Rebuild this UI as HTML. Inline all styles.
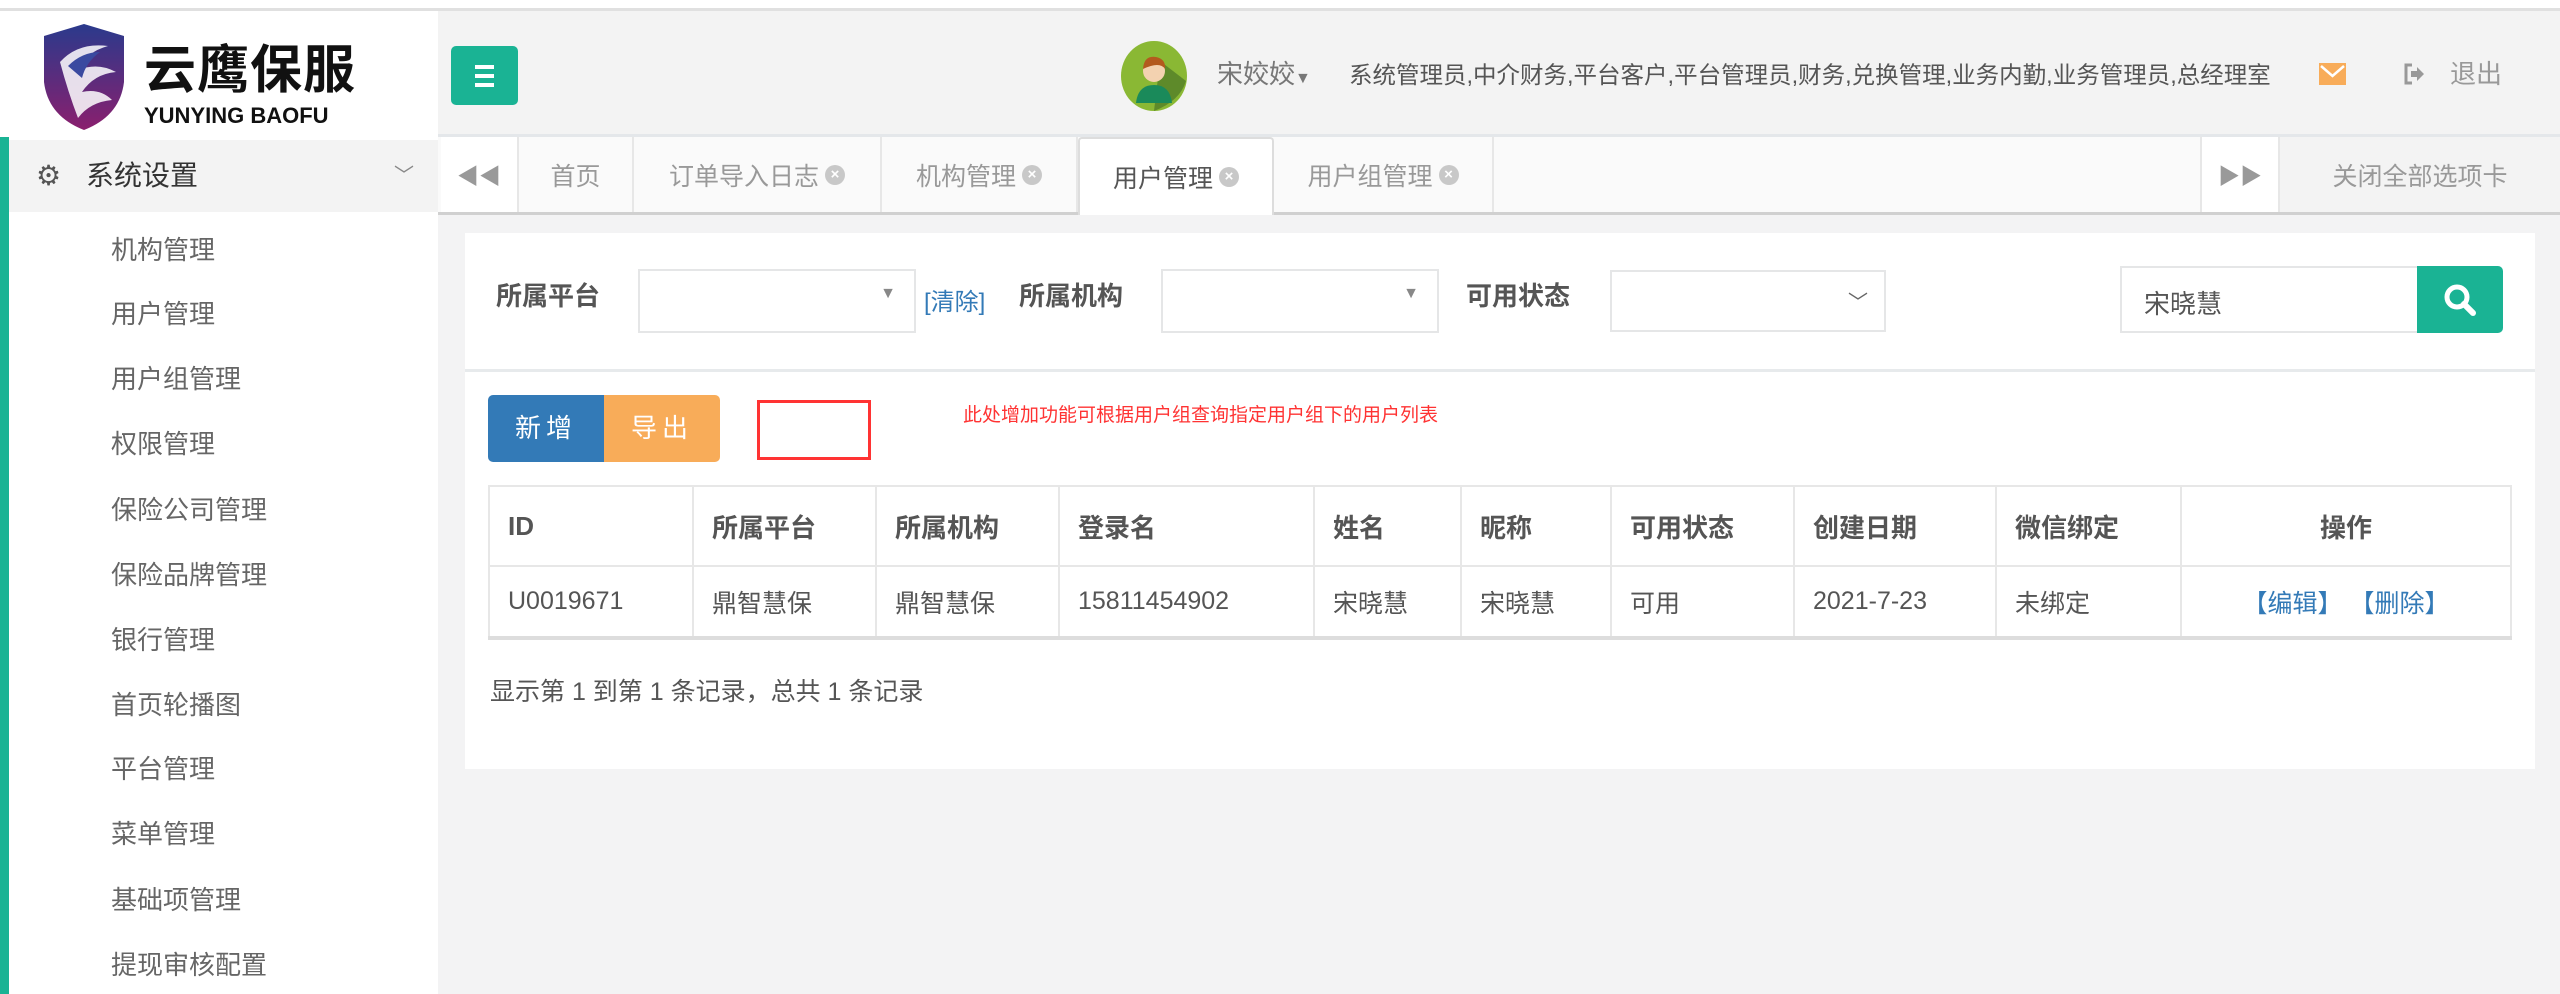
<!DOCTYPE html>
<html><head><meta charset="utf-8"><style>
*{margin:0;padding:0;box-sizing:border-box}
body{width:2560px;height:994px;overflow:hidden;background:#f3f3f4;font-family:"Liberation Sans","Noto Sans CJK SC",sans-serif;color:#676a6c;position:relative}
.a{position:absolute}
.topw{left:0;top:0;width:2560px;height:11px;background:#fff;border-bottom:3px solid #e0e0e0}
.hdr{left:438px;top:11px;width:2122px;height:126px;background:#f3f3f3;border-bottom:3px solid #e4e7ea}
.logo{left:0;top:11px;width:438px;height:126px;background:#fff}
.tabs{left:438px;top:137px;width:2122px;height:78px;background:#fafafa;border-bottom:3px solid #d0d0d0}
.tab{top:0;height:75px;border-right:2px solid #e7e7e7;font-size:25px;color:#999;display:flex;align-items:center;justify-content:center;gap:6px}
.x{display:inline-block;width:20px;height:20px;border-radius:50%;background:#c8c8c8;color:#fff;font-size:15px;line-height:20px;text-align:center;font-weight:bold}
.side{left:0;top:137px;width:438px;height:857px;background:#fff}
.mi{left:111px;font-size:26px;color:#666;line-height:30px}
.panel{left:465px;top:233px;width:2070px;height:536px;background:#fff}
.lbl{font-size:26px;font-weight:bold;color:#555;line-height:30px}
.sel{background:#fff;border:2px solid #e5e6e7}
table{border-collapse:collapse;font-size:25px;color:#555}
td{border:2px solid #e7e7e7;padding-left:18px}
</style></head><body>
<div class="a topw"></div>
<div class="a hdr"></div>
<div class="a logo">
 <svg class="a" style="left:38px;top:10px" width="92" height="112" viewBox="0 0 92 110">
  <defs><linearGradient id="g" x1="0" y1="0" x2="0" y2="1"><stop offset="0" stop-color="#2a3a8c"/><stop offset="1" stop-color="#8a1f6e"/></linearGradient></defs>
  <path d="M6 14 L46 2 L86 14 L86 60 Q82 94 46 108 Q10 94 6 60 Z" fill="url(#g)"/>
  <path d="M22 40 Q40 20 70 24 Q48 30 40 48 Q60 40 78 50 Q56 52 44 70 Q62 66 74 78 Q52 80 40 96 Q30 70 22 40Z" fill="#fff" opacity=".85"/>
  <path d="M30 44 Q44 30 62 30 Q48 40 44 56Z" fill="#3a4aa0"/>
 </svg>
 <div class="a" style="left:144px;top:30px;font-size:52px;font-weight:bold;color:#111;letter-spacing:1px;line-height:60px">云鹰保服</div>
 <div class="a" style="left:144px;top:92px;font-size:22px;font-weight:bold;color:#111;line-height:26px">YUNYING BAOFU</div>
</div>
<div class="a" style="left:451px;top:46px;width:67px;height:59px;background:#1ab394;border-radius:5px">
 <div class="a" style="left:24px;top:19px;width:19px;height:4px;background:#fff"></div>
 <div class="a" style="left:24px;top:28px;width:19px;height:4px;background:#fff"></div>
 <div class="a" style="left:24px;top:37px;width:19px;height:4px;background:#fff"></div>
</div>
<svg class="a" style="left:1120px;top:41px" width="68" height="70" viewBox="0 0 68 70">
 <ellipse cx="34" cy="35" rx="33" ry="35" fill="#8ab834"/>
 <path d="M34 70 Q60 60 66 40 L40 20 Z" fill="#5e8a2a"/>
 <circle cx="34" cy="30" r="11" fill="#f3d2b0"/>
 <path d="M23 28 Q24 14 36 16 Q46 18 45 28 Q40 20 23 28Z" fill="#b35a1e"/>
 <path d="M16 62 Q18 44 34 44 Q50 44 52 62Z" fill="#1a8a5a"/>
</svg>
<div class="a" style="left:1217px;top:58px;font-size:26px;color:#777;line-height:32px">宋姣姣<span style="font-size:16px">▼</span></div>
<div class="a" style="left:1349px;top:60px;font-size:23.5px;color:#555;line-height:30px;white-space:nowrap">系统管理员,中介财务,平台客户,平台管理员,财务,兑换管理,业务内勤,业务管理员,总经理室</div>
<svg class="a" style="left:2319px;top:63px" width="27" height="22" viewBox="0 0 27 22"><rect width="27" height="22" fill="#f8ac59"/><path d="M2 3 L13.5 13 L25 3" stroke="#fff" stroke-width="2.5" fill="none"/></svg>
<svg class="a" style="left:2403px;top:63px" width="22" height="22" viewBox="0 0 22 22"><path d="M9 2 H3 V20 H9" stroke="#999" stroke-width="3" fill="none"/><path d="M8 8 H14 V4 L21 11 L14 18 V14 H8Z" fill="#999"/></svg>
<div class="a" style="left:2450px;top:58px;font-size:26px;color:#999;line-height:32px">退出</div>

<div class="a tabs">
 <div class="a tab" style="left:3px;width:78px;background:#fff;color:#999;font-size:22px">◀◀</div>
 <div class="a tab" style="left:81px;width:115px">首页</div>
 <div class="a tab" style="left:196px;width:248px">订单导入日志<span class="x">×</span></div>
 <div class="a tab" style="left:444px;width:196px">机构管理<span class="x">×</span></div>
 <div class="a tab" style="left:640px;width:196px;background:#fff;color:#555;height:78px;border:2px solid #ddd;border-bottom:none;border-radius:4px 4px 0 0">用户管理<span class="x">×</span></div>
 <div class="a tab" style="left:836px;width:220px">用户组管理<span class="x">×</span></div>
 <div class="a tab" style="left:1762px;width:80px;background:#fff;border-left:2px solid #e7e7e7;font-size:22px">▶▶</div>
 <div class="a tab" style="left:1842px;width:280px;background:#f3f3f3;border:none">关闭全部选项卡</div>
</div>

<div class="a side">
 <div class="a" style="left:0;top:3px;width:438px;height:72px;background:#f3f3f3"></div>
 <div class="a" style="left:0;top:0;width:9px;height:857px;background:#1ab394"></div>
 <div class="a" style="left:36px;top:22px;font-size:28px;color:#555;line-height:34px">⚙</div>
 <div class="a" style="left:86px;top:22px;font-size:28px;color:#333;line-height:34px">系统设置</div>
 <div class="a" style="left:394px;top:22px;font-size:20px;color:#888">﹀</div>
 <div class="a mi" style="top:98px">机构管理</div>
 <div class="a mi" style="top:162px">用户管理</div>
 <div class="a mi" style="top:227px">用户组管理</div>
 <div class="a mi" style="top:292px">权限管理</div>
 <div class="a mi" style="top:358px">保险公司管理</div>
 <div class="a mi" style="top:423px">保险品牌管理</div>
 <div class="a mi" style="top:488px">银行管理</div>
 <div class="a mi" style="top:553px">首页轮播图</div>
 <div class="a mi" style="top:617px">平台管理</div>
 <div class="a mi" style="top:682px">菜单管理</div>
 <div class="a mi" style="top:748px">基础项管理</div>
 <div class="a mi" style="top:813px">提现审核配置</div>
</div>

<div class="a panel"></div>
<div class="a lbl" style="left:496px;top:281px">所属平台</div>
<div class="a sel" style="left:638px;top:269px;width:278px;height:64px"><span class="a" style="right:18px;top:14px;font-size:16px;color:#888">▼</span></div>
<div class="a" style="left:924px;top:282px;font-size:24px;color:#337ab7">[清除]</div>
<div class="a lbl" style="left:1019px;top:281px">所属机构</div>
<div class="a sel" style="left:1161px;top:269px;width:278px;height:64px"><span class="a" style="right:18px;top:14px;font-size:16px;color:#888">▼</span></div>
<div class="a lbl" style="left:1466px;top:281px">可用状态</div>
<div class="a sel" style="left:1610px;top:270px;width:276px;height:62px"><span class="a" style="right:16px;top:14px;font-size:20px;color:#666">﹀</span></div>
<div class="a sel" style="left:2120px;top:266px;width:300px;height:67px"><span class="a" style="left:22px;top:16px;font-size:26px;color:#555">宋晓慧</span></div>
<div class="a" style="left:2417px;top:266px;width:86px;height:67px;background:#1ab394;border-radius:0 5px 5px 0">
 <svg class="a" style="left:26px;top:17px" width="34" height="34" viewBox="0 0 34 34"><circle cx="14" cy="14" r="10" stroke="#fff" stroke-width="5" fill="none"/><path d="M21 21 L30 30" stroke="#fff" stroke-width="6" stroke-linecap="round"/></svg>
</div>
<div class="a" style="left:465px;top:369px;width:2070px;height:3px;background:#e7eaec"></div>
<div class="a" style="left:488px;top:395px;width:116px;height:67px;background:#337ab7;border-radius:5px 0 0 5px;color:#fff;font-size:26px;text-align:center;line-height:67px;letter-spacing:5px">新增</div>
<div class="a" style="left:604px;top:395px;width:116px;height:67px;background:#f8ac59;border-radius:0 5px 5px 0;color:#fff;font-size:26px;text-align:center;line-height:67px;letter-spacing:5px">导出</div>
<div class="a" style="left:757px;top:400px;width:114px;height:60px;border:3px solid #f33"></div>
<div class="a" style="left:963px;top:404px;font-size:19px;color:#f33;line-height:24px">此处增加功能可根据用户组查询指定用户组下的用户列表</div>

<table class="a" style="left:488px;top:485px;width:2024px">
<tr style="height:80px;font-weight:bold;font-size:26px">
<td style="width:204px">ID</td><td style="width:183px">所属平台</td><td style="width:183px">所属机构</td><td style="width:255px">登录名</td><td style="width:147px">姓名</td><td style="width:150px">昵称</td><td style="width:183px">可用状态</td><td style="width:202px">创建日期</td><td style="width:185px">微信绑定</td><td style="text-align:center;padding:0">操作</td></tr>
<tr style="height:72px;border-bottom:4px solid #ddd">
<td>U0019671</td><td>鼎智慧保</td><td>鼎智慧保</td><td>15811454902</td><td>宋晓慧</td><td>宋晓慧</td><td>可用</td><td>2021-7-23</td><td>未绑定</td><td style="text-align:center;padding:0;color:#337ab7">【编辑】&nbsp;【删除】</td></tr>
</table>
<div class="a" style="left:490px;top:677px;font-size:25px;color:#555;line-height:30px">显示第 1 到第 1 条记录，总共 1 条记录</div>
</body></html>
